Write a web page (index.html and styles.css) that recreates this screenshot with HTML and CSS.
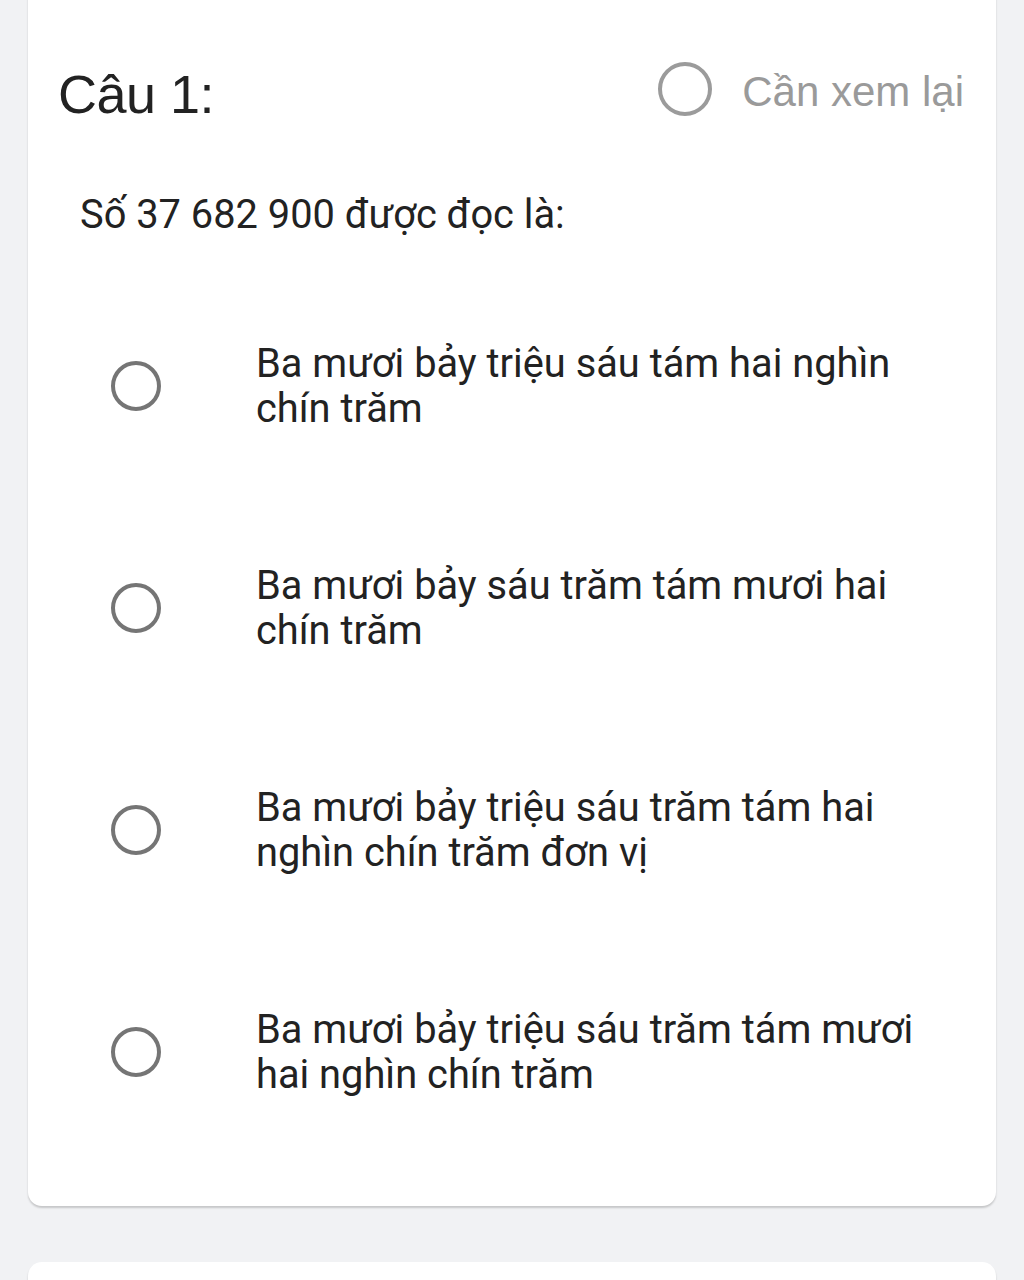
FILE: index.html
```html
<!DOCTYPE html>
<html lang="vi">
<head>
<meta charset="utf-8">
<link rel="stylesheet" href="styles.css">
</head>
<body>
<div class="page">
  <div class="card">
    <div class="head">
      <div class="title">Câu 1:</div>
      <div class="review">
        <span class="review-ring"></span>
        <span class="review-text">Cần xem lại</span>
      </div>
    </div>
    <div class="question">Số 37 682 900 được đọc là:</div>
    <div class="options">
      <div class="option"><span class="radio"></span><span class="label">Ba mươi bảy triệu sáu tám hai nghìn chín trăm</span></div>
      <div class="option"><span class="radio"></span><span class="label">Ba mươi bảy sáu trăm tám mươi hai chín trăm</span></div>
      <div class="option"><span class="radio"></span><span class="label">Ba mươi bảy triệu sáu trăm tám hai nghìn chín trăm đơn vị</span></div>
      <div class="option"><span class="radio"></span><span class="label">Ba mươi bảy triệu sáu trăm tám mươi hai nghìn chín trăm</span></div>
    </div>
  </div>
  <div class="card next"></div>
</div>
</body>
</html>
```
FILE: styles.css
```css
html, body {
  margin: 0;
  padding: 0;
  background: #f1f2f4;
  height: 1280px;
  overflow: hidden;
}
.page {
  padding: 0 28px;
  display: flex;
  flex-direction: column;
  gap: 56px;
}
.card {
  background: #ffffff;
  border-radius: 14px;
  box-shadow: 0 2px 2px rgba(0,0,0,0.18);
  margin-top: -20px;
  padding: 20px 0 0;
  height: 1226px;
  box-sizing: border-box;
}
.card.next {
  margin-top: 0;
  height: 200px;
}
.head {
  display: flex;
  justify-content: space-between;
  align-items: center;
  padding: 57px 32px 0 30px;
  height: 64px;
}
.title {
  font-family: "Liberation Sans", Arial, sans-serif;
  font-size: 54px;
  color: #222;
  letter-spacing: -0.5px;
  padding-top: 10px;
}
.review {
  display: flex;
  align-items: center;
  gap: 30px;
}
.review-ring {
  width: 46px;
  height: 46px;
  border: 4px solid #9b9b9b;
  border-radius: 50%;
}
.review-text {
  font-family: "Liberation Sans", Arial, sans-serif;
  font-size: 42px;
  color: #9a9a9a;
  padding-top: 6px;
}
.question {
  font-family: Roboto, "Noto Sans", sans-serif;
  font-size: 39.8px;
  color: #222;
  padding: 70px 0 0 52px;
}
.options {
  display: flex;
  flex-direction: column;
  gap: 102px;
  padding: 88px 60px 0 83px;
}
.option {
  display: flex;
  align-items: center;
  min-height: 120px;
}
.radio {
  flex: none;
  width: 42px;
  height: 42px;
  border: 4.5px solid #757575;
  border-radius: 50%;
}
.label {
  font-family: Roboto, "Noto Sans", sans-serif;
  font-size: 39.8px;
  line-height: 45px;
  color: #222;
  margin-left: 95px;
}
```
